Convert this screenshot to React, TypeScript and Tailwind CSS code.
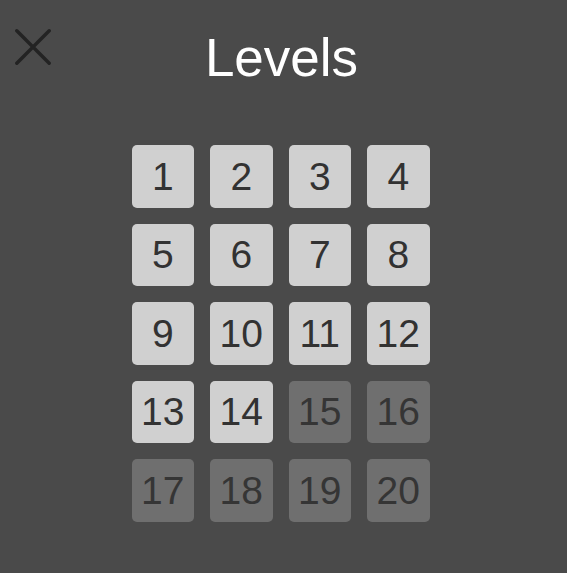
import React from "react";

export default function App() {
  const levels = Array.from({ length: 20 }, (_, i) => i + 1);
  return (
    <div
      className="w-[567px] h-[573px] bg-[#4a4a4a] flex flex-col items-center"
      style={{ fontFamily: '"Liberation Sans", Arial, sans-serif' }}
    >
      <div className="w-full relative h-[145px] flex justify-center">
        <button className="absolute left-[15px] top-[29px] w-[36px] h-[36px]">
          <svg viewBox="0 0 36 36" width="36" height="36">
            <path d="M1.8 1.8 L34.2 34.2 M34.2 1.8 L1.8 34.2" stroke="#232323" strokeWidth="3.4" strokeLinecap="round" />
          </svg>
        </button>
        <h1 className="text-white text-[53px] leading-none mt-[31px] mr-[4px]">Levels</h1>
      </div>
      <div className="grid grid-cols-4 gap-x-[16px] gap-y-[16px] mr-[6px]">
        {levels.map((n) => {
          const unlocked = n <= 14;
          return (
            <div
              key={n}
              className={
                unlocked
                  ? "w-[62.5px] h-[62.5px] rounded-[5px] bg-[#d0d0d0] text-[#323232] flex items-center justify-center text-[39px] leading-none"
                  : "w-[62.5px] h-[62.5px] rounded-[5px] bg-[#6f6f6f] text-[#353535] flex items-center justify-center text-[39px] leading-none"
              }
            >
              {n}
            </div>
          );
        })}
      </div>
    </div>
  );
}
